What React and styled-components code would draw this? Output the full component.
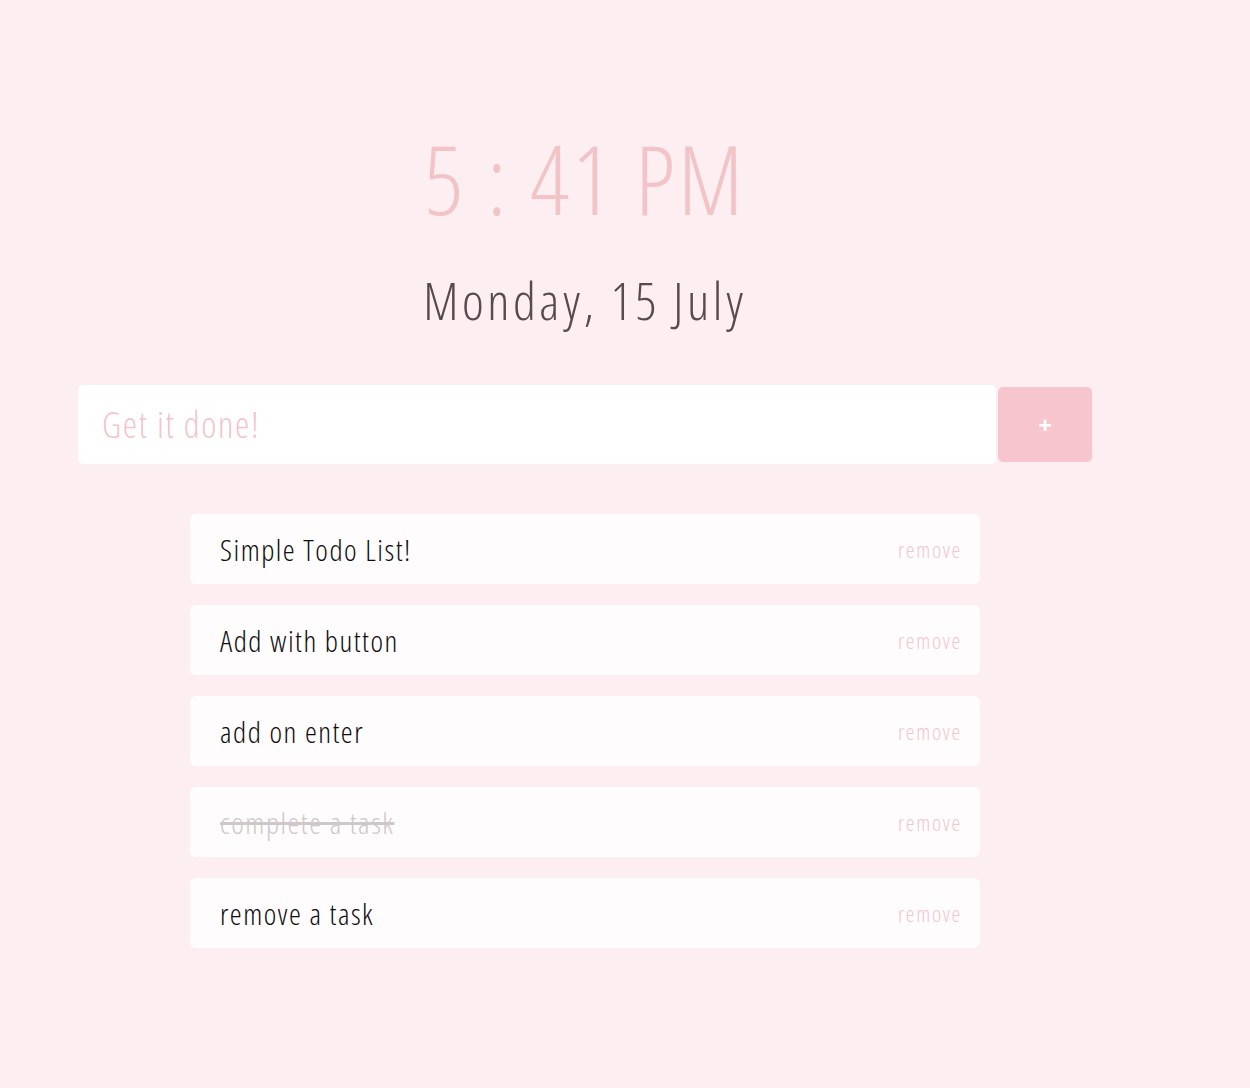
import React from "react";
import styled, { createGlobalStyle } from "styled-components";

const Global = createGlobalStyle`
  html, body { margin: 0; padding: 0; background: #fdeff1; }
  body { font-family: "Open Sans", "Liberation Sans", sans-serif; font-stretch: 75%; font-weight: 300; }
`;

const Page = styled.div`
  min-height: 1088px;
  padding-top: 118px;
  box-sizing: border-box;
`;

const Main = styled.main`
  width: 1014px;
  margin-left: 78px;
  display: flex;
  flex-direction: column;
  align-items: center;
`;

const Clock = styled.h1`
  margin: 0;
  font-size: 96px;
  font-weight: 300;
  line-height: 120px;
  color: #f2c4c8;
  letter-spacing: 3px;
`;

const DateLine = styled.h2`
  margin: 0;
  margin-top: 31px;
  font-size: 52px;
  font-weight: 300;
  line-height: 62px;
  color: #5a4a4f;
  letter-spacing: 3.5px;
`;

const Form = styled.form`
  margin-top: 54px;
  width: 100%;
  display: flex;
  align-items: center;
  gap: 2px;
`;

const Input = styled.input`
  flex: 1;
  height: 79px;
  box-sizing: border-box;
  border: none;
  border-radius: 5px;
  background: #ffffff;
  padding: 0 24px;
  font-family: inherit;
  font-stretch: 75%;
  font-weight: 300;
  font-size: 36px;
  letter-spacing: 1.7px;
  color: #333;
  outline: none;
  caret-color: #333;
  &::placeholder { color: #f2c4cc; }
`;

const AddButton = styled.button`
  width: 94px;
  height: 75px;
  border: none;
  border-radius: 5px;
  background: #f7c5cd;
  color: #ffffff;
  font-family: "Open Sans", sans-serif;
  font-size: 24px;
  font-weight: 700;
  cursor: pointer;
`;

const List = styled.ul`
  list-style: none;
  margin: 50px 0 0;
  padding: 0;
  width: 790px;
  display: flex;
  flex-direction: column;
  gap: 21px;
`;

const Item = styled.li`
  height: 70px;
  background: #fffcfd;
  border-radius: 6px;
  display: flex;
  align-items: center;
  justify-content: space-between;
  padding: 0 18px 0 30px;
`;

const ItemText = styled.span`
  font-size: 30px;
  font-weight: 300;
  letter-spacing: 1.5px;
  color: ${(p) => (p.$done ? "#cfc8c9" : "#100d0e")};
  text-decoration: ${(p) => (p.$done ? "line-through" : "none")};
`;

const Remove = styled.span`
  font-size: 22px;
  font-weight: 300;
  color: #f0c6cd;
  letter-spacing: 1.7px;
`;

const todos = [
  { text: "Simple Todo List!", done: false },
  { text: "Add with button", done: false },
  { text: "add on enter", done: false },
  { text: "complete a task", done: true },
  { text: "remove a task", done: false },
];

export default function App() {
  return (
    <>
      <Global />
      <Page>
        <Main>
          <Clock>5 : 41 PM</Clock>
          <DateLine>Monday, 15 July</DateLine>
          <Form onSubmit={(e) => e.preventDefault()}>
            <Input placeholder="Get it done!" autoFocus />
            <AddButton type="submit">+</AddButton>
          </Form>
          <List>
            {todos.map((t) => (
              <Item key={t.text}>
                <ItemText $done={t.done}>{t.text}</ItemText>
                <Remove>remove</Remove>
              </Item>
            ))}
          </List>
        </Main>
      </Page>
    </>
  );
}
